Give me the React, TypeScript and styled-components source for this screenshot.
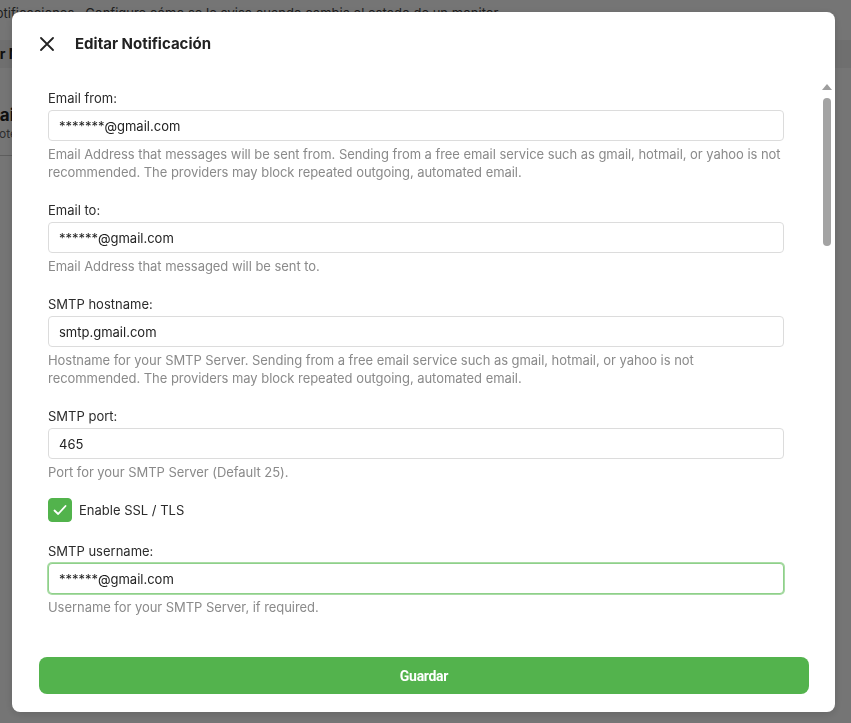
import React from "react";
import styled, { createGlobalStyle } from "styled-components";

const GlobalStyle = createGlobalStyle`
  html, body {
    margin: 0;
    padding: 0;
    background: #ffffff;
    font-family: Inter, "Noto Sans", Arial, sans-serif;
  }
  * { box-sizing: border-box; }
`;

// pagina de fondo (se ve tras el overlay)
const Page = styled.div`
  height: 723px;
  overflow: hidden;
  color: #222;
  font-size: 14px;
`;

const PageTop = styled.div`
  padding: 5px 0 0 0;
  height: 40px;
  font-size: 13px;
  color: #444;
  white-space: nowrap;
  text-indent: -14px;
`;

const PageTabs = styled.div`
  height: 28px;
  background: #f2f2f2;
  font-weight: 700;
  font-size: 14px;
  line-height: 28px;
  white-space: nowrap;
  text-indent: -50px;
`;

const PageItem = styled.div`
  padding: 36px 0 14px 0;
  border-bottom: 1px solid #ccc;
  width: 60px;
  white-space: nowrap;
  overflow: hidden;
`;

const PageItemTitle = styled.div`
  font-weight: 700;
  font-size: 17px;
  line-height: 22px;
  text-indent: -26px;
`;

const PageItemSub = styled.div`
  font-size: 12px;
  color: #666;
  text-indent: -10px;
`;

const Overlay = styled.div`
  position: fixed;
  inset: 0;
  background: rgba(0, 0, 0, 0.54);
  display: flex;
  align-items: flex-start;
  padding: 12px 16px 11px 12px;
`;

const Modal = styled.div`
  width: 823px;
  height: 700px;
  background: #fff;
  border-radius: 8px;
  display: flex;
  flex-direction: column;
  overflow: hidden;
  box-shadow: 0 2px 10px rgba(0, 0, 0, 0.15);
`;

const Header = styled.div`
  height: 68px;
  flex: none;
  display: flex;
  align-items: center;
  gap: 21px;
  padding: 0 0 5px 28px;
`;

const CloseButton = styled.button`
  border: 0;
  background: none;
  padding: 0;
  width: 14px;
  height: 14px;
  display: flex;
  cursor: pointer;
  color: #222;
`;

const Title = styled.h2`
  margin: 0;
  font-size: 15px;
  font-weight: 700;
  color: #222;
`;

const BodyWrap = styled.div`
  flex: 1;
  position: relative;
  min-height: 0;
`;

const Body = styled.div`
  height: 100%;
  overflow: hidden;
  padding: 9px 51px 20px 36px;
`;

// barra de desplazamiento dibujada encima del contenido
const ScrollBar = styled.div`
  position: absolute;
  top: 4px;
  right: 3px;
  width: 10px;
  display: flex;
  flex-direction: column;
  align-items: center;
  gap: 8px;
`;

const ScrollArrow = styled.span`
  width: 0;
  height: 0;
  border-left: 5px solid transparent;
  border-right: 5px solid transparent;
  border-bottom: 6px solid #9e9e9e;
`;

const ScrollThumb = styled.span`
  width: 8px;
  height: 148px;
  border-radius: 4px;
  background: #a3a3a3;
`;

const Field = styled.div`
  margin-bottom: 20px;
`;

const Label = styled.label`
  display: block;
  font-size: 13px;
  line-height: 19px;
  color: #2b2b2b;
  margin-bottom: 2px;
`;

const Input = styled.input<{ $focused?: boolean }>`
  display: block;
  width: 100%;
  height: 31px;
  border: 1px solid ${(p) => (p.$focused ? "#8fd08a" : "#dcdcdc")};
  box-shadow: ${(p) => (p.$focused ? "0 0 0 1px #a9dca5" : "none")};
  border-radius: 4px;
  padding: 0 10px;
  font-family: inherit;
  font-size: 13px;
  color: #222;
  background: #fff;
  outline: none;
`;

const TextArea = styled.textarea`
  display: block;
  width: 100%;
  height: 220px;
  border: 1px solid #dcdcdc;
  border-radius: 4px;
  padding: 8px 10px;
  font-family: inherit;
  font-size: 13px;
  color: #222;
  resize: none;
  outline: none;
`;

const Help = styled.div`
  margin-top: 4px;
  font-size: 13px;
  line-height: 18px;
  letter-spacing: -0.05px;
  color: #8a8a8a;
`;

const CheckRow = styled.label`
  display: flex;
  align-items: center;
  gap: 7px;
  font-size: 13px;
  color: #2b2b2b;
  margin: -3px 0 20px 0;
  cursor: pointer;
`;

const CheckBox = styled.span<{ $checked?: boolean }>`
  width: 24px;
  height: 24px;
  border-radius: 4px;
  flex: none;
  display: flex;
  align-items: center;
  justify-content: center;
  background: ${(p) => (p.$checked ? "#52b34c" : "#fff")};
  border: 1px solid ${(p) => (p.$checked ? "#52b34c" : "#cfcfcf")};
`;

const Footer = styled.div`
  flex: none;
  padding: 25px 26px 18px 27px;
`;

const SaveButton = styled.button`
  width: 100%;
  height: 37px;
  border: 0;
  border-radius: 8px;
  background: #53b34d;
  color: #fff;
  font-family: Roboto, Inter, sans-serif;
  font-size: 14px;
  font-weight: 700;
  letter-spacing: -0.3px;
  cursor: pointer;
`;

const CloseIcon = () => (
  <svg width="14" height="14" viewBox="0 0 14 14" fill="none">
    <path d="M1 1L13 13M13 1L1 13" stroke="currentColor" strokeWidth="1.8" strokeLinecap="round" />
  </svg>
);

const CheckIcon = () => (
  <svg width="16" height="16" viewBox="0 0 16 16" fill="none">
    <path d="M2.5 8.5L6.2 12L13.5 4" stroke="#fff" strokeWidth="1.8" strokeLinecap="round" strokeLinejoin="round" />
  </svg>
);

type FieldDef = {
  label: string;
  value: string;
  help?: string;
  focused?: boolean;
  type?: string;
};

const fieldsTop: FieldDef[] = [
  {
    label: "Email from:",
    value: "*******@gmail.com",
    help: "Email Address that messages will be sent from. Sending from a free email service such as gmail, hotmail, or yahoo is not recommended. The providers may block repeated outgoing, automated email.",
  },
  {
    label: "Email to:",
    value: "******@gmail.com",
    help: "Email Address that messaged will be sent to.",
  },
  {
    label: "SMTP hostname:",
    value: "smtp.gmail.com",
    help: "Hostname for your SMTP Server. Sending from a free email service such as gmail, hotmail, or yahoo is not recommended. The providers may block repeated outgoing, automated email.",
  },
  {
    label: "SMTP port:",
    value: "465",
    help: "Port for your SMTP Server (Default 25).",
  },
];

const fieldsBottom: FieldDef[] = [
  {
    label: "SMTP username:",
    value: "******@gmail.com",
    help: "Username for your SMTP Server, if required.",
    focused: true,
  },
  {
    label: "SMTP password:",
    value: "****************",
    help: "Password for your SMTP Server, if required.",
    type: "password",
  },
  {
    label: "Email subject:",
    value: "[{{ status }}] {{ monitor_name }}",
    help: "Subject line of the notification email. Template variables are supported.",
  },
];

function FormField({ f }: { f: FieldDef }) {
  return (
    <Field>
      <Label>{f.label}</Label>
      <Input $focused={f.focused} type={f.type ?? "text"} defaultValue={f.value} />
      {f.help && <Help>{f.help}</Help>}
    </Field>
  );
}

export default function App() {
  return (
    <>
      <GlobalStyle />
      <Page>
        <PageTop>Notificaciones · Configure cómo se le avisa cuando cambia el estado de un monitor</PageTop>
        <PageTabs>Agregar Notificación</PageTabs>
        <PageItem>
          <PageItemTitle>Email</PageItemTitle>
          <PageItemSub>Notes</PageItemSub>
        </PageItem>
      </Page>
      <Overlay>
        <Modal>
          <Header>
            <CloseButton aria-label="Cerrar">
              <CloseIcon />
            </CloseButton>
            <Title>Editar Notificación</Title>
          </Header>
          <BodyWrap>
            <Body>
              {fieldsTop.map((f) => (
                <FormField key={f.label} f={f} />
              ))}
              <CheckRow>
                <CheckBox $checked>
                  <CheckIcon />
                </CheckBox>
                Enable SSL / TLS
              </CheckRow>
              {fieldsBottom.map((f) => (
                <FormField key={f.label} f={f} />
              ))}
              <Field>
                <Label>Email body:</Label>
                <TextArea defaultValue={"{{ monitor_name }} is {{ status }}\n\n{{ message }}"} />
              </Field>
            </Body>
            <ScrollBar>
              <ScrollArrow />
              <ScrollThumb />
            </ScrollBar>
          </BodyWrap>
          <Footer>
            <SaveButton>Guardar</SaveButton>
          </Footer>
        </Modal>
      </Overlay>
    </>
  );
}
